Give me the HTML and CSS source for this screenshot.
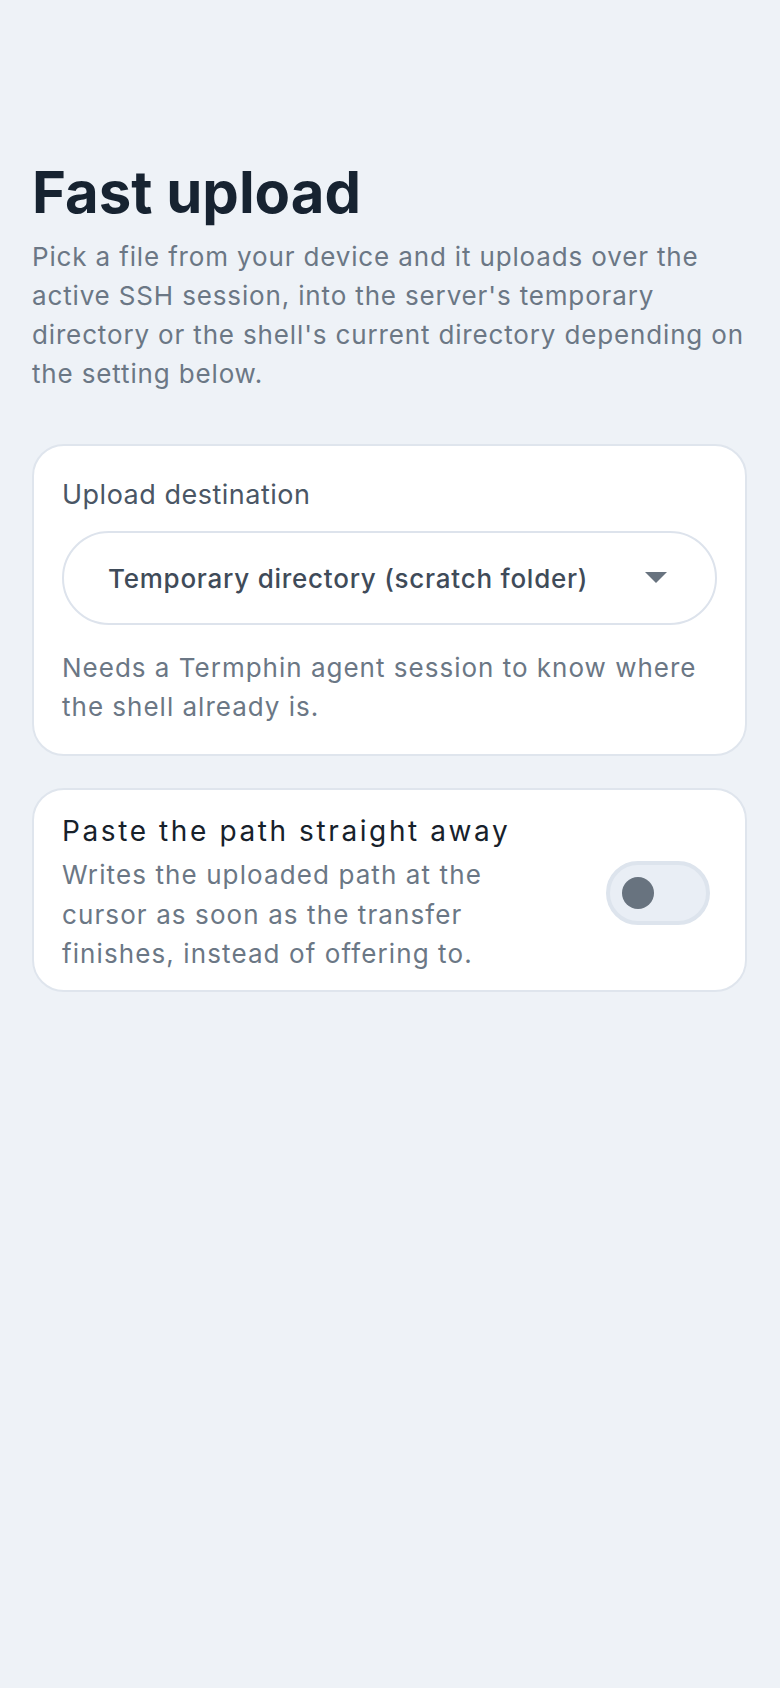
FILE: index.html
```html
<!DOCTYPE html>
<html lang="en">
<head>
<meta charset="utf-8">
<title>Fast upload</title>
<link rel="stylesheet" href="styles.css">
</head>
<body>
<main class="page">
  <h1 class="title">Fast upload</h1>
  <p class="intro">Pick a file from your device and it uploads over the active SSH session, into the server's temporary directory or the shell's current directory depending on the setting below.</p>

  <section class="card card-dest">
    <div class="label">Upload destination</div>
    <div class="select">
      <span class="select-text">Temporary directory (scratch folder)</span>
      <svg class="caret" width="22" height="12" viewBox="0 0 22 12" aria-hidden="true"><path d="M0 0 H22 L11 11 Z" fill="#68737f"/></svg>
    </div>
    <p class="help">Needs a Termphin agent session to know where the shell already is.</p>
  </section>

  <section class="card card-toggle">
    <div class="toggle-text">
      <div class="toggle-title">Paste the path straight away</div>
      <p class="toggle-desc">Writes the uploaded path at the cursor as soon as the transfer finishes, instead of offering to.</p>
    </div>
    <div class="switch" role="switch" aria-checked="false"><span class="knob"></span></div>
  </section>
</main>
</body>
</html>
```
FILE: styles.css
```css
* { box-sizing: border-box; }
html, body { margin: 0; padding: 0; }
body {
  background: #eef2f7;
  font-family: Inter, "Noto Sans", sans-serif;
  min-height: 1688px;
}
.page {
  padding: 160px 33px 40px 32px;
}
.title {
  margin: 0;
  font-size: 58px;
  line-height: 64px;
  font-weight: 700;
  letter-spacing: 0;
  color: #172331;
}
.intro {
  margin: 12.5px -8px 0 0;
  font-size: 26px;
  line-height: 39.3px;
  color: #6b7785;
  letter-spacing: 0.85px;
}
.card {
  background: #ffffff;
  border: 2px solid #dfe5ed;
  border-radius: 32px;
}
.card-dest {
  margin-top: 50px;
  padding: 29px 28px 28px;
}
.label {
  font-size: 27px;
  line-height: 40px;
  color: #4a5665;
  letter-spacing: 0.5px;
}
.select {
  margin-top: 16.5px;
  height: 94px;
  border: 2px solid #dde3ec;
  border-radius: 47px;
  display: flex;
  align-items: center;
  justify-content: space-between;
  padding: 0 48px 0 44px;
}
.select-text {
  font-size: 26px;
  font-weight: 500;
  color: #3f4b59;
  letter-spacing: 0.75px;
}
.caret { display: block; }
.help {
  margin: 22.5px 0 0;
  font-size: 26px;
  line-height: 39.3px;
  color: #6b7785;
  letter-spacing: 1px;
}
.card-toggle {
  margin-top: 32px;
  padding: 22.5px 35px 17px 28px;
  display: flex;
  align-items: center;
  justify-content: space-between;
}
.toggle-text {
  width: 455px;
}
.toggle-title {
  font-size: 28px;
  line-height: 36px;
  color: #17212b;
  letter-spacing: 2.6px;
}
.toggle-desc {
  margin: 6.5px 0 0;
  font-size: 26px;
  line-height: 39.3px;
  color: #6b7785;
  letter-spacing: 1.1px;
}
.switch {
  width: 104px;
  height: 64px;
  border: 4px solid #dde4ed;
  background: #e9eef5;
  border-radius: 32px;
  display: flex;
  align-items: center;
  padding-left: 12px;
}
.knob {
  width: 32px;
  height: 32px;
  border-radius: 50%;
  background: #68737f;
}
```
